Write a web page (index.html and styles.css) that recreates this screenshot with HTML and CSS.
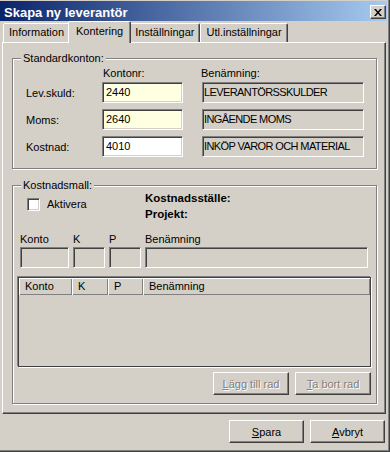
FILE: index.html
```html
<!DOCTYPE html>
<html lang="sv">
<head>
    <meta charset="UTF-8">
    <meta name="viewport" content="width=device-width, initial-scale=1.0">
    <title>Skapa ny leverantör</title>
    <link rel="stylesheet" href="styles.css">
</head>
<body>
    <div class="window">
        <div class="titlebar">
            <span class="title">Skapa ny leverantör</span>
            <div class="close">
                <svg width="8" height="7" viewBox="0 0 8 7">
                    <path d="M0 0h2l2 2.4L6 0h2L5 3.5 8 7H6L4 4.6 2 7H0l3-3.5z" fill="#000"/>
                </svg>
            </div>
        </div>

        <div class="tabs">
            <div class="tab">Information</div>
            <div class="tab active">Kontering</div>
            <div class="tab">Inställningar</div>
            <div class="tab">Utl.inställningar</div>
        </div>

        <div class="panel">
            <div class="group std">
                <span class="group-title">Standardkonton:</span>
                <div class="std-head">
                    <span class="col-nr">Kontonr:</span>
                    <span>Benämning:</span>
                </div>
                <div class="std-row">
                    <label>Lev.skuld:</label>
                    <div class="field nr yellow">2440</div>
                    <div class="field name">LEVERANTÖRSSKULDER</div>
                </div>
                <div class="std-row">
                    <label>Moms:</label>
                    <div class="field nr yellow">2640</div>
                    <div class="field name">INGÅENDE MOMS</div>
                </div>
                <div class="std-row">
                    <label>Kostnad:</label>
                    <div class="field nr white">4010</div>
                    <div class="field name">INKÖP VAROR OCH MATERIAL</div>
                </div>
            </div>

            <div class="group cost">
                <span class="group-title">Kostnadsmall:</span>
                <div class="cost-top">
                    <div class="check-wrap">
                        <span class="checkbox"></span>
                        <span>Aktivera</span>
                    </div>
                    <div class="info">
                        <b>Kostnadsställe:</b>
                        <b>Projekt:</b>
                    </div>
                </div>

                <div class="cost-fields">
                    <span>Konto</span>
                    <span>K</span>
                    <span>P</span>
                    <span>Benämning</span>
                    <div class="field"></div>
                    <div class="field"></div>
                    <div class="field"></div>
                    <div class="field"></div>
                </div>

                <div class="list">
                    <div class="list-head">
                        <div class="c-konto">Konto</div>
                        <div class="c-k">K</div>
                        <div class="c-p">P</div>
                        <div class="c-name">Benämning</div>
                    </div>
                </div>

                <div class="row-buttons">
                    <button disabled><u>L</u>ägg till rad</button>
                    <button disabled><u>T</u>a bort rad</button>
                </div>
            </div>
        </div>

        <div class="footer">
            <button><u>S</u>para</button>
            <button><u>A</u>vbryt</button>
        </div>
    </div>
</body>
</html>
```

FILE: styles.css
```css
*{
    box-sizing: border-box;
}
body{
    margin: 0;
    background-color: #d4d0c8;
    font: 11px "Liberation Sans", Arial, sans-serif;
    color: #000;
}
.window{
    width: 390px;
    height: 452px;
    padding: 1px 2px 0 0;
    border-right: 1px solid #404040;
    border-bottom: 1px solid #404040;
    box-shadow: inset -1px -1px 0 #808080;
    background-color: #d4d0c8;
}

/* title bar */
.titlebar{
    height: 20px;
    display: flex;
    justify-content: space-between;
    align-items: flex-start;
    padding: 0 1px 0 4px;
    background: linear-gradient(to right, #0a246a, #a6caf0);
}
.title{
    color: white;
    font-weight: bold;
    font-size: 13px;
    line-height: 14px;
    padding-top: 5px;
}
.close{
    width: 16px;
    height: 14px;
    margin-top: 4px;
    display: flex;
    align-items: center;
    justify-content: center;
    background-color: #d4d0c8;
    border: 1px solid;
    border-color: #fff #404040 #404040 #fff;
    box-shadow: inset -1px -1px 0 #808080;
}

/* tabs */
.tabs{
    height: 21px;
    display: flex;
    align-items: flex-end;
    padding-left: 3px;
}
.tab{
    height: 19px;
    padding: 1px 5px 0;
    line-height: 15px;
    border: 1px solid;
    border-bottom: none;
    border-color: #fff #404040 transparent #fff;
    border-radius: 2px 2px 0 0;
    box-shadow: inset -1px 0 0 #808080;
    background-color: #d4d0c8;
}
.tab.active{
    position: relative;
    z-index: 1;
    height: 22px;
    margin: 0 -2px -1px;
    padding: 2px 7px 0;
}

.panel{
    height: 372px;
    margin: 0 1px 0 2px;
    padding: 15px 8px 0 9px;
    border: 1px solid;
    border-color: #fff #404040 #404040 #fff;
    box-shadow: inset -1px -1px 0 #808080;
}

/* etched group boxes */
.group{
    position: relative;
    border: 1px solid #808080;
    box-shadow: 1px 1px 0 #fff, inset 1px 1px 0 #fff;
}
.group-title{
    position: absolute;
    top: -8px;
    left: 8px;
    padding: 0 2px;
    line-height: 14px;
    background-color: #d4d0c8;
}
.cost{
    margin-top: 16px;
    padding: 4px 8px 8px 7px;
}

/* sunken fields */
.field{
    height: 21px;
    padding: 0 3px;
    line-height: 19px;
    white-space: nowrap;
    overflow: hidden;
    border: 1px solid;
    border-color: #808080 #fff #fff #808080;
    box-shadow: inset 1px 1px 0 #404040, inset -1px -1px 0 #d4d0c8;
    background-color: #d4d0c8;
}
.yellow{
    background-color: #ffffe1;
}
.white{
    background-color: #fff;
}

/* Standardkonton */
.std{
    padding-bottom: 11px;
}
.std-head{
    display: flex;
    height: 14px;
    line-height: 14px;
    margin: 7px 0 2px;
    padding-left: 90px;
}
.col-nr{
    width: 98px;
}
.std-row{
    display: flex;
    align-items: center;
    height: 21px;
}
.std-row + .std-row{
    margin-top: 6px;
}
.std-row label{
    width: 89px;
    padding-left: 13px;
}
.nr{
    width: 81px;
}
.name{
    width: 162px;
    margin-left: 19px;
    padding-left: 1px;
    letter-spacing: -0.6px;
}

/* Kostnadsmall */
.cost-top{
    display: flex;
    height: 32px;
}
.check-wrap{
    width: 125px;
    display: flex;
    align-items: flex-start;
    padding: 8px 0 0 7px;
    line-height: 13px;
}
.checkbox{
    width: 13px;
    height: 13px;
    margin-right: 7px;
    background-color: #fff;
    border: 1px solid;
    border-color: #808080 #fff #fff #808080;
    box-shadow: inset 1px 1px 0 #404040, inset -1px -1px 0 #d4d0c8;
}
.info{
    display: flex;
    flex-direction: column;
    font-size: 11.5px;
    line-height: 16px;
}
.cost-fields{
    display: grid;
    grid-template-columns: 49px 32px 32px 223px;
    grid-template-rows: 14px 21px;
    column-gap: 4px;
    row-gap: 1px;
    margin-top: 10px;
    line-height: 14px;
}

.list{
    width: 353px;
    height: 90px;
    margin: 9px 0 0 -2px;
    border: 1px solid #404040;
    box-shadow: -1px -1px 0 #808080, 1px 1px 0 #fff;
}
.list-head{
    display: flex;
    height: 17px;
    line-height: 16px;
}
.list-head div{
    padding-left: 6px;
    box-shadow: inset 1px 1px 0 #fff, inset -1px -1px 0 #808080;
}
.c-konto{
    width: 53px;
}
.c-k{
    width: 36px;
}
.c-p{
    width: 35px;
}
.c-name{
    flex: 1;
}

/* buttons */
button{
    width: 75px;
    height: 23px;
    padding: 0;
    font: 11px "Liberation Sans", Arial, sans-serif;
    color: #000;
    background-color: #d4d0c8;
    border: 1px solid;
    border-color: #fff #404040 #404040 #fff;
    box-shadow: inset -1px -1px 0 #808080;
    border-radius: 0;
}
button:disabled{
    color: #808080;
    text-shadow: 1px 1px 0 #fff;
}
.row-buttons{
    display: flex;
    justify-content: flex-end;
    gap: 6px;
    margin: 5px -3px 0 0;
}
.row-buttons button{
    width: 76px;
}
.footer{
    display: flex;
    justify-content: flex-end;
    gap: 6px;
    margin-top: 6px;
    padding-right: 2px;
}
```
